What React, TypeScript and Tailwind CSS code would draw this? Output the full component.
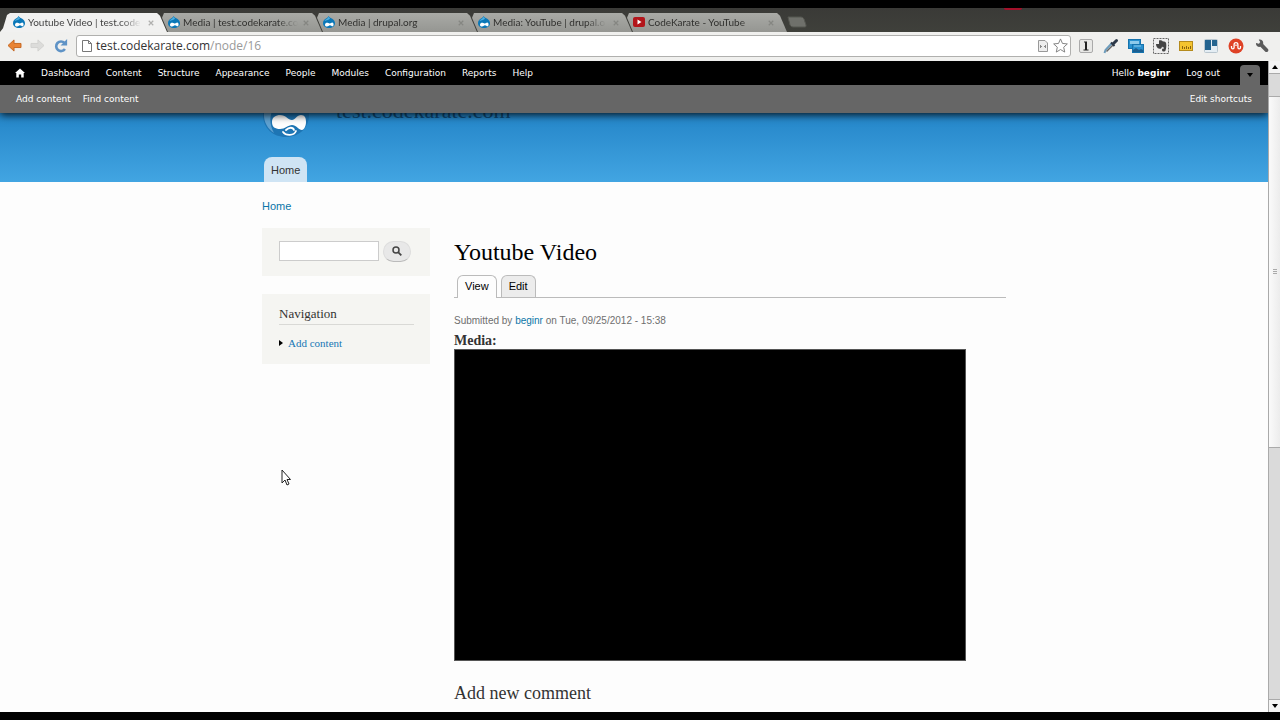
import type { ReactNode } from "react";

type Tab = { title: string; icon: "drupal" | "youtube"; active?: boolean };

const tabs: Tab[] = [
  { title: "Youtube Video | test.code", icon: "drupal", active: true },
  { title: "Media | test.codekarate.co", icon: "drupal" },
  { title: "Media | drupal.org", icon: "drupal" },
  { title: "Media: YouTube | drupal.o", icon: "drupal" },
  { title: "CodeKarate - YouTube", icon: "youtube" },
];

const adminLinks = [
  "Dashboard",
  "Content",
  "Structure",
  "Appearance",
  "People",
  "Modules",
  "Configuration",
  "Reports",
  "Help",
];

function DrupalIcon() {
  return (
    <svg viewBox="0 0 24 24" className="size-3 shrink-0" aria-hidden="true">
      <path d="M11 0c2 3 5 4 7.500 5.500C22 8 24 11 24 14.500 24 20 18.500 24 12 24S0 20 0 14.500C0 9 3 7 6 5c2.500-1.500 4-2.500 5-5z" fill="#0b78b8" />
      <path d="M11 1c0 4-6 5-8 9 4-2 9-2 11-5z" fill="#4fb0e0" />
      <path d="M4 18c0-4 3-5 5.500-4.500 2 .3 3 1.500 4.500 1.500s2.500-2 4.500-2c3 0 3.500 6 1.500 7.500-2 1-4-2-6-2-2.500 0-3.500 2.500-6 2.500-2 0-4-.8-4-3z" fill="#fff" />
    </svg>
  );
}

function YoutubeIcon() {
  return (
    <svg viewBox="0 0 24 20" className="h-[10px] w-3 shrink-0" aria-hidden="true">
      <rect width="24" height="20" rx="4" fill="#b3151b" />
      <path d="M9 5l8 5-8 5z" fill="#fff" />
    </svg>
  );
}

function BrowserTab({ tab }: { tab: Tab }) {
  return (
    <div
      className={`flex h-[19px] w-[167px] items-center pr-[10px] pl-[13px] ${
        tab.active
          ? "relative z-10 bg-[#f1f1f0] text-[#444] [clip-path:polygon(0_100%,3px_80%,7px_10%,10px_0,157px_0,160px_15%,100%_100%)]"
          : "-ml-3 bg-linear-to-b from-[#a9aaa6] to-[#959692] text-[#30302e] [clip-path:polygon(13px_100%,7px_25%,9px_0,157px_0,160px_15%,100%_100%)]"
      }`}
    >
      <a href="#" className="flex min-w-0 flex-1 items-center gap-[3px] pb-px">
        {tab.icon === "drupal" ? <DrupalIcon /> : <YoutubeIcon />}
        <span className="flex-1 text-[10px] leading-4 whitespace-nowrap [mask-image:linear-gradient(to_right,black_82%,transparent)]">
          {tab.title}
        </span>
      </a>
      <button aria-label={`Close ${tab.title}`} className="ml-1 flex size-3 items-center justify-center">
        <svg viewBox="0 0 8 8" className="size-[6px]" aria-hidden="true">
          <path d="M1 1l6 6M7 1L1 7" stroke={tab.active ? "#b0b0ae" : "#858682"} strokeWidth="1.600" />
        </svg>
      </button>
    </div>
  );
}

function ToolButton({ label, children, className = "w-[25px]" }: { label: string; children: ReactNode; className?: string }) {
  return (
    <button aria-label={label} className={`flex h-6 shrink-0 items-center justify-center ${className}`}>
      {children}
    </button>
  );
}

function BrowserToolbar() {
  return (
    <div className="flex h-[29px] shrink-0 items-center bg-[#f0f0ee] pr-1 pb-[2px] pl-[3px] font-['Open_Sans','Noto_Sans',sans-serif]">
      <ToolButton label="Back" className="w-[23px]">
        <svg viewBox="0 0 16 14" className="h-[13px] w-[15px]" aria-hidden="true">
          <path d="M7.500 1v3.800H15v4.400H7.500V13L1 7z" fill="#e98435" stroke="#c4651f" strokeLinejoin="round" />
        </svg>
      </ToolButton>
      <ToolButton label="Forward" className="w-[23px]">
        <svg viewBox="0 0 16 14" className="h-[13px] w-[15px]" aria-hidden="true">
          <path d="M8.500 1v3.800H1v4.400h7.500V13L15 7z" fill="#dcdcda" stroke="#d0d0ce" strokeLinejoin="round" />
        </svg>
      </ToolButton>
      <ToolButton label="Reload" className="w-[23px]">
        <svg viewBox="0 0 16 16" className="size-[14px]" aria-hidden="true">
          <path d="M12.500 11.500A5.500 5.500 0 1 1 12 4.500" fill="none" stroke="#5f93c6" strokeWidth="3" />
          <path d="M15 0v7.500H7.500z" fill="#5f93c6" />
        </svg>
      </ToolButton>
      <div className="ml-1 flex h-[22px] min-w-0 flex-1 items-center rounded-[3px] border border-[#b0b0ae] bg-white pr-[2px] pl-[5px]">
        <svg viewBox="0 0 10 12" className="h-3 w-[10px] shrink-0" aria-hidden="true">
          <path d="M.5.500h6l3 3v8h-9zM6.500.500v3h3" fill="#fff" stroke="#777" />
        </svg>
        <a href="#" className="ml-1 flex-1 text-[12px] leading-4 text-[#333]">
          test.codekarate.com<span className="text-[#999]">/node/16</span>
        </a>
        <svg viewBox="0 0 10 12" className="mr-[5px] h-3 w-[10px] shrink-0" aria-hidden="true">
          <path d="M.5.500h6.500l2.500 2.500v8.500h-9z" fill="#eee" stroke="#999" />
          <path d="M2.500 5v3M2.500 6.500h1.500M7.500 5v3M7.500 6.500H6" fill="none" stroke="#888" />
        </svg>
        <button aria-label="Bookmark this page">
          <svg viewBox="0 0 16 16" className="size-[15px]" aria-hidden="true">
            <path d="M8 1l2.100 4.800 5.200.5-3.900 3.500 1.100 5.200L8 12.300 3.500 15l1.100-5.200L.7 6.300l5.200-.5z" fill="#fff" stroke="#7d7d7d" strokeLinejoin="round" />
          </svg>
        </button>
      </div>
      <div className="ml-[2px] flex shrink-0 items-center">
        <ToolButton label="Instapaper">
          <svg viewBox="0 0 14 14" className="size-[14px]" aria-hidden="true">
            <rect x=".5" y=".5" width="13" height="13" rx="1.500" fill="#e8e8e6" stroke="#aaa" />
            <path d="M5 2.500h3v8h1.500v1h-5v-1H6v-7H5z" fill="#222" />
          </svg>
        </ToolButton>
        <ToolButton label="Pick color">
          <svg viewBox="0 0 16 16" className="size-4" aria-hidden="true">
            <path d="M1.500 15l1-3L9 5" fill="none" stroke="#6d9cbc" strokeWidth="2" />
            <path d="M3.500 13.500L10.500 6.500" stroke="#666" strokeWidth="1.500" />
            <path d="M8 4.500L11.500 8" stroke="#2c3848" strokeWidth="2" />
            <path d="M10.500 5.500l3-3" stroke="#2c3848" strokeWidth="3" strokeLinecap="round" />
          </svg>
        </ToolButton>
        <ToolButton label="Page windows">
          <svg viewBox="0 0 16 16" className="size-4" aria-hidden="true">
            <rect x=".5" y="1.500" width="12" height="9" fill="#2a91cf" stroke="#1673ad" />
            <rect x="2" y="3" width="9" height="3" fill="#8dcaeb" />
            <rect x="4.500" y="6.500" width="11" height="8" fill="#2a91cf" stroke="#1673ad" />
            <path d="M5 14v-2l3-2 3 2 2-1 2 1v2z" fill="#1b5f91" />
            <path d="M6 8h7" stroke="#8dcaeb" />
          </svg>
        </ToolButton>
        <ToolButton label="Clip to Evernote">
          <svg viewBox="0 0 16 16" className="size-4" aria-hidden="true">
            <rect x=".5" y=".5" width="15" height="15" fill="#eee" stroke="#666" strokeDasharray="2 1" />
            <path d="M6 2.500c1.500-.5 3 0 3.500.7 2 .2 3.500.5 3.700 2.300.3 3 0 5-.7 7-.5 1.500-3.500 1.500-3.500-.5 0-1.300 1-1.500 2-1.400V9.500c-1.500 0-1.500-.5-2-1-.3 2-1 2.500-2.500 2.300C4 10.500 3 8 3 6h3z" fill="#444" />
          </svg>
        </ToolButton>
        <ToolButton label="Measure page">
          <svg viewBox="0 0 14 12" className="h-3 w-[14px]" aria-hidden="true">
            <rect x=".5" y="1.500" width="13" height="9" fill="#f4c430" stroke="#b58b1c" />
            <path d="M3.500 9V6M5.500 9V7M7.500 9V6M9.500 9V7M11.500 9V6" stroke="#8a6410" />
          </svg>
        </ToolButton>
        <ToolButton label="Trello">
          <svg viewBox="0 0 14 14" className="size-[14px]" aria-hidden="true">
            <rect x=".5" y=".5" width="13" height="13" rx="1" fill="#e4edf3" stroke="#b9c6cf" />
            <path d="M1 1h6v10H1zM8 1h5v6H8z" fill="#24648f" />
          </svg>
        </ToolButton>
        <ToolButton label="StumbleUpon">
          <svg viewBox="0 0 16 16" className="size-4" aria-hidden="true">
            <circle cx="8" cy="8" r="7.500" fill="#df4226" />
            <path d="M3.500 8v1.500a1.300 1.300 0 0 0 2.600 0V6.500a1.900 1.900 0 0 1 3.800 0v3a1.300 1.300 0 0 0 2.600 0V8M8 6.500v1.500" fill="none" stroke="#fff" strokeWidth="1.300" />
          </svg>
        </ToolButton>
        <ToolButton label="Settings" className="w-7">
          <svg viewBox="0 0 16 16" className="size-[14px]" aria-hidden="true">
            <path d="M1.200 4.500l3.300.8L6 3.500 4.300.8C7.500 0 10 2.500 9.300 5.700l5.500 5.800c1.600 2-1 4.500-3 3L6.200 8.900C3.500 9.700.5 7.500 1.200 4.500z" fill="#5b5b5b" />
          </svg>
        </ToolButton>
      </div>
    </div>
  );
}

function AdminToolbar() {
  return (
    <nav aria-label="Administration" className="relative z-10 shrink-0 font-['DejaVu_Sans',Verdana,sans-serif] text-[9px] leading-4 text-white shadow-[0_2px_8px_rgba(0,0,0,0.85)]">
      <div className="flex h-6 items-center justify-between bg-black pr-2 pl-[7px]">
        <div className="flex items-center">
          <a href="#" aria-label="Home" className="px-2">
            <svg viewBox="0 0 10 10" className="size-[10px]" aria-hidden="true">
              <path d="M5 .5L0 5h1.300v4.500h2.500V6.500h2.400v3h2.500V5H10z" fill="#fff" />
            </svg>
          </a>
          {adminLinks.map((label) => (
            <a key={label} href="#" className="px-2">
              {label}
            </a>
          ))}
        </div>
        <div className="flex h-full items-center">
          <a href="#" className="px-2">
            Hello <strong>beginr</strong>
          </a>
          <a href="#" className="px-2">
            Log out
          </a>
          <button aria-label="Hide shortcuts" className="ml-3 flex h-5 w-5 items-center justify-center self-end rounded-t-[4px] bg-[#666]">
            <svg viewBox="0 0 6 4" className="h-1 w-[6px]" aria-hidden="true">
              <path d="M0 0h6L3 4z" fill="#000" />
            </svg>
          </button>
        </div>
      </div>
      <div className="flex h-7 items-center justify-between bg-[#666] px-4">
        <div className="flex gap-3">
          <a href="#">Add content</a>
          <a href="#">Find content</a>
        </div>
        <a href="#">Edit shortcuts</a>
      </div>
    </nav>
  );
}

function SiteLogo() {
  return (
    <svg viewBox="0 0 48 54" className="h-[54px] w-12 shrink-0" aria-hidden="true">
      <path d="M23 0c3 6 8 8 13 12 7 5 11 12 11 19 0 13-10 22-23 22S1 44 1 31c0-8 4-15 11-19 5-3 9-6 11-12z" fill="#1d75b4" />
      <path d="M6 18C-1 28 1 42 12 49 7 40 7 30 13 22z" fill="#8cc0e4" opacity=".6" />
      <path d="M10 38c0-5 4-7 8-7 6 0 8 5 12 5 3 0 5-5 9-5s5 3 5 7-2 8-4 8c-3 0-6-5-10-5s-7 4-12 4-8-2-8-7z" fill="#fff" />
      <path d="M21 48c3 4 11 4 13-1M24 46c3-3 7-3 8 0" fill="none" stroke="#fff" strokeWidth="1.800" strokeLinecap="round" />
    </svg>
  );
}

function SiteHeader() {
  return (
    <header className="h-[69px] shrink-0 overflow-hidden bg-linear-to-b from-[#2385c8] to-[#42a5e2]">
      <div className="mx-auto flex h-full w-full max-w-[744px] flex-col items-start justify-end">
        <div className="flex items-center gap-[26px]">
          <SiteLogo />
          <span className="font-['Liberation_Serif',serif] text-[22px] leading-7 text-[#0c4a78]">test.codekarate.com</span>
        </div>
        <a href="#" className="mt-[19px] ml-[2px] rounded-t-lg bg-[#cfe4f4] px-[7px] pt-[5px] pb-1 text-[11px] leading-4 text-[#333]">
          Home
        </a>
      </div>
    </header>
  );
}

function Sidebar() {
  return (
    <aside className="flex w-[168px] shrink-0 flex-col gap-[18px]">
      <form className="flex h-12 items-center gap-1 bg-[#f5f5f2] pb-[2px] pl-[17px]" onSubmit={(e) => e.preventDefault()}>
        <input type="search" aria-label="Search" className="h-5 w-[100px] border border-[#ccc] bg-white px-1 text-[11px] outline-none" />
        <button aria-label="Search" className="flex h-[21px] w-7 items-center justify-center rounded-full border border-[#ddd] border-b-[#bbb] bg-[#e8e8e8]">
          <svg viewBox="0 0 10 10" className="size-[10px]" aria-hidden="true">
            <circle cx="4" cy="4" r="3" fill="none" stroke="#444" strokeWidth="1.500" />
            <path d="M6.300 6.300L9.300 9.300" stroke="#444" strokeWidth="1.800" />
          </svg>
        </button>
      </form>
      <section className="bg-[#f5f5f2] pt-3 pr-4 pb-[13px] pl-[17px] font-['Liberation_Serif',serif]">
        <h2 className="border-b border-[#d9d9d6] pb-[2px] text-[13px] leading-4 text-[#333]">Navigation</h2>
        <ul className="mt-[10px]">
          <li className="flex items-center gap-[5px]">
            <svg viewBox="0 0 4 6" className="h-[6px] w-1" aria-hidden="true">
              <path d="M0 0l4 3-4 3z" fill="#000" />
            </svg>
            <a href="#" className="text-[11px] leading-4 text-[#1777b5]">
              Add content
            </a>
          </li>
        </ul>
      </section>
    </aside>
  );
}

function Article() {
  return (
    <main className="min-w-0 flex-1 pt-2">
      <h1 className="font-['Liberation_Serif',serif] text-[24px] leading-8 text-black">Youtube Video</h1>
      <div className="mt-[7px] flex h-[23px] items-end gap-1 border-b border-[#bbb] pl-[3px] text-[11px] leading-4 text-black">
        <a href="#" className="-mb-px rounded-t-md border border-b-0 border-[#bbb] bg-[#fdfdfd] px-[7px] pt-[2px] pb-1">
          View
        </a>
        <a href="#" className="rounded-t-md border border-b-0 border-[#bbb] bg-[#ececec] px-[7px] pt-[2px] pb-[3px]">
          Edit
        </a>
      </div>
      <p className="mt-[15px] text-[10px] leading-4 text-[#6f6f6f]">
        Submitted by{" "}
        <a href="#" className="text-[#0b75a8]">
          beginr
        </a>{" "}
        on Tue, 09/25/2012 - 15:38
      </p>
      <div className="mt-1 font-['Liberation_Serif',serif] text-[14px] leading-4 font-bold text-[#333]">Media:</div>
      <div role="img" aria-label="Video player" className="h-[312px] w-[512px] max-w-full border border-[#555] bg-black" />
      <h2 className="mt-5 font-['Liberation_Serif',serif] text-[18px] leading-6 text-[#333]">Add new comment</h2>
    </main>
  );
}

function Scrollbar() {
  return (
    <div aria-hidden="true" className="flex w-3 shrink-0 flex-col border-l border-[#aaa] bg-[#dadada]">
      <div className="flex h-3 items-center justify-center bg-[#f4f4f4]">
        <svg viewBox="0 0 6 4" className="h-1 w-[6px]">
          <path d="M0 4h6L3 0z" fill="#000" />
        </svg>
      </div>
      <div className="grow-[22] basis-0 border-t border-[#aaa]" />
      <div className="flex grow-[352] basis-0 flex-col items-center justify-center gap-px border-y border-[#aaa] bg-linear-to-r from-[#fafafa] to-[#ececec]">
        <i className="h-px w-1 bg-[#aaa]" />
        <i className="h-px w-1 bg-[#aaa]" />
        <i className="h-px w-1 bg-[#aaa]" />
      </div>
      <div className="grow-[253] basis-0 border-b border-[#aaa]" />
      <div className="flex h-3 items-center justify-center bg-[#f4f4f4]">
        <svg viewBox="0 0 6 4" className="h-1 w-[6px]">
          <path d="M0 0h6L3 4z" fill="#000" />
        </svg>
      </div>
    </div>
  );
}

export default function App() {
  return (
    <div className="relative flex h-screen flex-col overflow-hidden border-y-8 border-black bg-[#fdfdfd] font-['Liberation_Sans',Arial,sans-serif]">
      <div className="relative flex h-6 shrink-0 items-end bg-linear-to-b from-[#3a3a37] to-[#3f403b] font-['Lato','Noto_Sans',sans-serif]">
        {tabs.map((tab) => (
          <BrowserTab key={tab.title} tab={tab} />
        ))}
        <button aria-label="New tab" className="mb-1 flex">
          <svg viewBox="0 0 20 12" className="h-3 w-5" aria-hidden="true">
            <path d="M1 1h13q2 0 3 2l2 6q.5 2-1 2H6q-2 0-3-2z" fill="#6f706b" stroke="#555650" />
          </svg>
        </button>
        <div className="absolute top-0 right-[258px] h-[2px] w-[18px] rounded-b-full bg-[#a3112a]" />
      </div>
      <BrowserToolbar />
      <div className="flex min-h-0 flex-1">
        <div className="flex min-w-0 flex-1 flex-col overflow-hidden">
          <AdminToolbar />
          <SiteHeader />
          <div className="mx-auto w-full max-w-[744px]">
            <nav aria-label="Breadcrumb" className="flex pt-4 pb-[14px] text-[11px] leading-4">
              <a href="#" className="text-[#0b75a8]">
                Home
              </a>
            </nav>
            <div className="flex items-start gap-6">
              <Sidebar />
              <Article />
            </div>
          </div>
        </div>
        <Scrollbar />
      </div>
      <svg viewBox="0 0 10 17" className="pointer-events-none absolute top-[461px] left-[281px] h-[17px] w-[10px]" aria-hidden="true">
        <path d="M1 1v13l3-3 2 5 2-1-2-4.500h3.500z" fill="#fff" stroke="#222" strokeLinejoin="round" />
      </svg>
    </div>
  );
}
